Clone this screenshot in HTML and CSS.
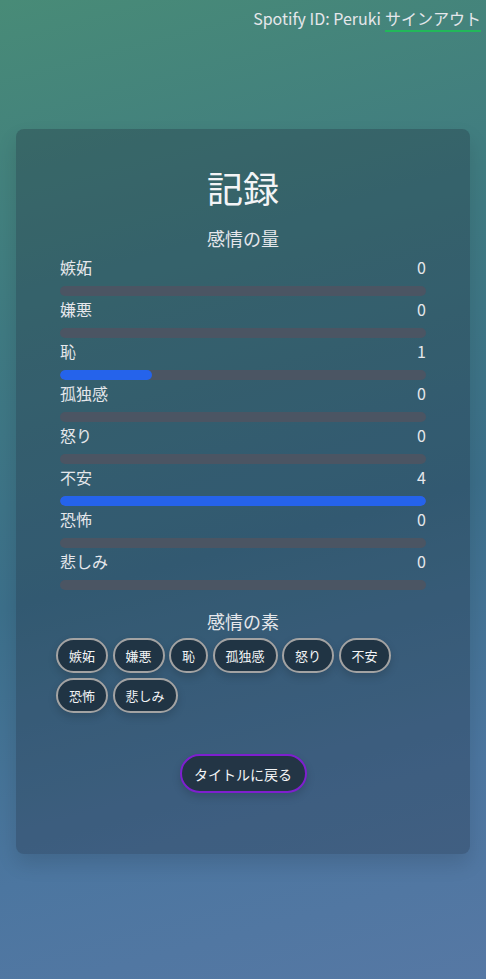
FILE: index.html
```html
<!DOCTYPE html>
<html lang="ja">
<head>
<meta charset="utf-8">
<title>記録</title>
<link rel="stylesheet" href="styles.css">
</head>
<body>
<div class="page">
  <header class="topbar">
    <span class="user">Spotify ID: Peruki</span>
    <a class="signout" href="#">サインアウト</a>
  </header>
  <main class="card">
    <h1 class="title">記録</h1>
    <h2 class="subtitle">感情の量</h2>
    <div class="rows">
      <div class="row"><div class="row-head"><span>嫉妬</span><span>0</span></div><div class="bar"><div class="fill" style="width:0%"></div></div></div>
      <div class="row"><div class="row-head"><span>嫌悪</span><span>0</span></div><div class="bar"><div class="fill" style="width:0%"></div></div></div>
      <div class="row"><div class="row-head"><span>恥</span><span>1</span></div><div class="bar"><div class="fill" style="width:25%"></div></div></div>
      <div class="row"><div class="row-head"><span>孤独感</span><span>0</span></div><div class="bar"><div class="fill" style="width:0%"></div></div></div>
      <div class="row"><div class="row-head"><span>怒り</span><span>0</span></div><div class="bar"><div class="fill" style="width:0%"></div></div></div>
      <div class="row"><div class="row-head"><span>不安</span><span>4</span></div><div class="bar"><div class="fill" style="width:100%"></div></div></div>
      <div class="row"><div class="row-head"><span>恐怖</span><span>0</span></div><div class="bar"><div class="fill" style="width:0%"></div></div></div>
      <div class="row"><div class="row-head"><span>悲しみ</span><span>0</span></div><div class="bar"><div class="fill" style="width:0%"></div></div></div>
    </div>
    <h2 class="subtitle subtitle-2">感情の素</h2>
    <div class="chips">
      <span class="chip">嫉妬</span>
      <span class="chip">嫌悪</span>
      <span class="chip">恥</span>
      <span class="chip">孤独感</span>
      <span class="chip">怒り</span>
      <span class="chip">不安</span>
      <span class="chip">恐怖</span>
      <span class="chip">悲しみ</span>
    </div>
    <div class="actions">
      <button class="back">タイトルに戻る</button>
    </div>
  </main>
</div>
</body>
</html>
```
FILE: styles.css
```css
* { box-sizing: border-box; }
html, body { margin: 0; padding: 0; }
body {
  font-family: "Noto Sans CJK JP", "Noto Sans", sans-serif;
  color: #e5e7eb;
}
.page {
  min-height: 979px;
  background: linear-gradient(165deg, #488b77 0%, #3f7a82 30%, #3c6f8a 55%, #4c76a0 80%, #5678a4 100%);
  padding-bottom: 126px;
}
.topbar {
  display: flex;
  justify-content: flex-end;
  align-items: flex-start;
  gap: 4px;
  height: 129px;
  padding: 6px 5px 0 0;
  font-size: 16px;
  line-height: 24px;
}
.user { color: #e5e7eb; }
.signout {
  color: #e5e7eb;
  text-decoration: none;
  border-bottom: 2px solid #22b85a;
}
.card {
  margin: 0 16px;
  border-radius: 8px;
  background: rgba(31, 41, 55, 0.3);
  box-shadow: 0 10px 20px rgba(0, 0, 0, 0.12);
  padding: 38px 44px 61px;
}
.title {
  margin: 0;
  text-align: center;
  font-size: 36px;
  line-height: 40px;
  font-weight: 400;
  color: #f3f4f6;
}
.subtitle {
  margin: 17px 0 0;
  text-align: center;
  font-size: 18px;
  line-height: 28px;
  font-weight: 400;
  color: #e5e7eb;
}
.rows {
  margin-top: 2px;
  display: flex;
  flex-direction: column;
}
.row-head {
  display: flex;
  justify-content: space-between;
  font-size: 16px;
  line-height: 26px;
  margin-bottom: 6px;
}
.bar {
  height: 10px;
  border-radius: 5px;
  background: #4b5563;
  overflow: hidden;
}
.fill {
  height: 100%;
  background: #2563eb;
  border-radius: 5px;
}
.subtitle-2 { margin-top: 17px; }
.chips {
  margin: 3px -4px 0;
  display: flex;
  flex-wrap: wrap;
  gap: 5px 4.5px;
}
.chip {
  height: 35px;
  padding: 0 11px;
  display: inline-flex;
  align-items: center;
  border: 2px solid #a3a3a3;
  border-radius: 18px;
  background: #203444;
  color: #f3f4f6;
  font-size: 13px;
  box-shadow: 0 4px 8px rgba(0, 0, 0, 0.15);
}
.actions {
  display: flex;
  justify-content: center;
  margin-top: 41px;
}
.back {
  height: 39px;
  padding: 0 12.5px;
  border: 2px solid #7e1fcf;
  border-radius: 20px;
  background: #233545;
  color: #f3f4f6;
  font-family: inherit;
  font-size: 14px;
  box-shadow: 0 4px 8px rgba(0, 0, 0, 0.15);
}
```
